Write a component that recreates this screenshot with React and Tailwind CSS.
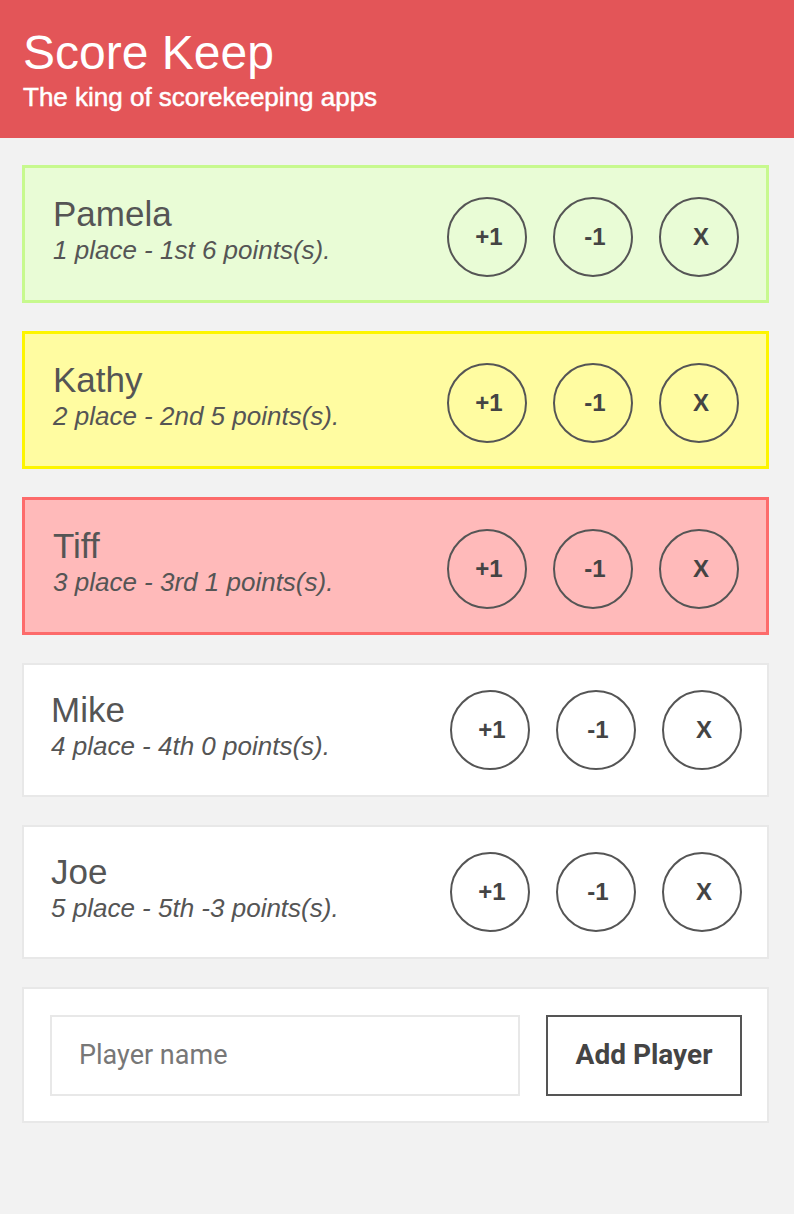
import React, { useState } from "react";

const players = [
  { name: "Pamela", place: 1, suffix: "1st", score: 6, tone: "green" },
  { name: "Kathy", place: 2, suffix: "2nd", score: 5, tone: "yellow" },
  { name: "Tiff", place: 3, suffix: "3rd", score: 1, tone: "red" },
  { name: "Mike", place: 4, suffix: "4th", score: 0, tone: "plain" },
  { name: "Joe", place: 5, suffix: "5th", score: -3, tone: "plain" },
];

const tones = {
  green: "h-[138px] bg-[#e9fcd6] border-[3px] border-[#c7f98e] pl-[28px] pr-[27px]",
  yellow: "h-[138px] bg-[#fffca1] border-[3px] border-[#fdf500] pl-[28px] pr-[27px]",
  red: "h-[138px] bg-[#ffbaba] border-[3px] border-[#fd6b6b] pl-[28px] pr-[27px]",
  plain: "h-[134px] bg-white border-2 border-[#e8e8e8] pl-[27px] pr-[25px]",
};

const CircleButton = ({ children }) => (
  <button
    type="button"
    className="w-[80px] h-[80px] rounded-full border-2 border-[#555] bg-transparent pl-[4px] text-[24px] font-bold text-[#444] flex items-center justify-center font-['Liberation_Sans',Arial,sans-serif]"
  >
    {children}
  </button>
);

const PlayerCard = ({ player }) => (
  <div className={`flex items-center justify-between ${tones[player.tone]}`}>
    <div className="flex flex-col text-[#555] mb-[8px]">
      <p className="text-[35px] leading-[40px]">{player.name}</p>
      <p className="text-[26px] leading-[32px] italic">
        {player.place} place - {player.suffix} {player.score} points(s).
      </p>
    </div>
    <div className={`flex gap-[26px] ${player.tone === "plain" ? "" : "mt-[5px]"}`}>
      <CircleButton>+1</CircleButton>
      <CircleButton>-1</CircleButton>
      <CircleButton>X</CircleButton>
    </div>
  </div>
);

const App = () => {
  const [name, setName] = useState("");

  return (
    <div className="min-h-[1214px] bg-[#f2f2f2] font-['Liberation_Sans',Arial,sans-serif]">
      <header className="h-[138px] bg-[#e35558] px-[23px] pt-[26px] text-white">
        <h1 className="text-[48px] leading-[54px]">Score Keep</h1>
        <p className="text-[26px] leading-[34px] [-webkit-text-stroke:0.5px_white]">
          The king of scorekeeping apps
        </p>
      </header>
      <main className="pl-[22px] pr-[25px] pt-[27px] flex flex-col gap-[28px]">
        {players.map((p) => (
          <PlayerCard key={p.name} player={p} />
        ))}
        <form
          onSubmit={(e) => e.preventDefault()}
          className="h-[136px] bg-white border-2 border-[#e8e8e8] pl-[26px] pr-[25px] flex items-center gap-[26px]"
        >
          <input
            value={name}
            onChange={(e) => setName(e.target.value)}
            placeholder="Player name"
            className="w-[470px] h-[81px] border-2 border-[#e8e8e8] px-[27px] text-[27px] text-[#555] placeholder:text-[#777] outline-none font-['Roboto',sans-serif]"
          />
          <button
            type="submit"
            className="w-[196px] h-[81px] border-2 border-[#555] text-[28px] font-bold text-[#444] font-['Roboto',sans-serif]"
          >
            Add Player
          </button>
        </form>
      </main>
    </div>
  );
};

export default App;
